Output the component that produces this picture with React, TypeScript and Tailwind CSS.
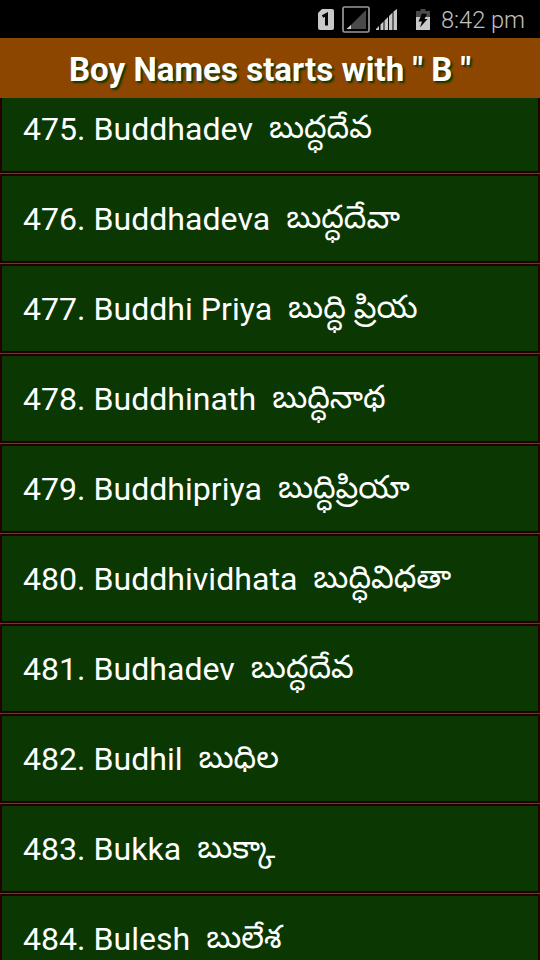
const names = [
  { id: 475, en: "Buddhadev", te: "బుద్ధదేవ" },
  { id: 476, en: "Buddhadeva", te: "బుద్ధదేవా" },
  { id: 477, en: "Buddhi Priya", te: "బుద్ధి ప్రియ" },
  { id: 478, en: "Buddhinath", te: "బుద్ధినాథ" },
  { id: 479, en: "Buddhipriya", te: "బుద్ధిప్రియా" },
  { id: 480, en: "Buddhividhata", te: "బుద్ధివిధతా" },
  { id: 481, en: "Budhadev", te: "బుద్ధదేవ" },
  { id: 482, en: "Budhil", te: "బుధిల" },
  { id: 483, en: "Bukka", te: "బుక్కా" },
  { id: 484, en: "Bulesh", te: "బులేశ" },
];

function SimIcon() {
  return (
    <svg width="16" height="21" viewBox="0 0 16 21">
      <path d="M4 0H14a2 2 0 0 1 2 2v17a2 2 0 0 1-2 2H2a2 2 0 0 1-2-2V4z" fill="#c8c8c8" />
      <path d="M4.500 7.500L8.500 5.500V16.500" fill="none" stroke="#000" strokeWidth="3" />
    </svg>
  );
}

function EmptySignalIcon() {
  return (
    <svg width="28" height="27" viewBox="0 0 28 27">
      <rect x="1" y="1" width="26" height="25" rx="1.500" fill="none" stroke="#999" strokeWidth="1.700" />
      <path d="M24 4v19H5z" fill="#4a4a4a" />
      <path d="M9 19v4H4.500z" fill="#d0d0d0" />
    </svg>
  );
}

function SignalIcon() {
  return (
    <svg width="21" height="21" viewBox="0 0 21 21">
      <path
        d="M0 21v-1l3-3v4zM4.500 21v-5.500l3-3V21zM8.500 21V11.500l3.500-3.500v13zM13 21V7l3.500-3.500V21zM17.500 21V2.500l3.500-2.500V21z"
        fill="#c8c8c8"
      />
    </svg>
  );
}

function BatteryIcon() {
  return (
    <svg width="14" height="21" viewBox="0 0 14 21">
      <path d="M4.500 0h5v2H14v6H0V2h4.500z" fill="#4a4a4a" />
      <path d="M0 8h14v13H0z" fill="#c8c8c8" />
      <path d="M6 4.500L2.500 12.500h3.500L4 18.500l7.500-8.500H8.500L11 5z" fill="#000" />
    </svg>
  );
}

export default function App() {
  return (
    <div className="flex h-[960px] w-[540px] flex-col overflow-hidden bg-[#0a3702] font-['Roboto','Noto_Sans_Telugu','Noto_Sans',sans-serif] text-white">
      <div className="flex h-[38px] shrink-0 items-center justify-end bg-black pr-[15px] text-[#c0c0c0]">
        <SimIcon />
        <span className="ml-2">
          <EmptySignalIcon />
        </span>
        <span className="ml-[6px]">
          <SignalIcon />
        </span>
        <span className="ml-[19px]">
          <BatteryIcon />
        </span>
        <span className="ml-[11px] mt-[3px] text-[23.6px] font-light">8:42 pm</span>
      </div>
      <header className="flex h-[60px] shrink-0 items-center justify-center bg-[#8c4600] pt-[3px] text-[33.1px] font-bold [text-shadow:2px_2px_2px_#0a3702]">
        Boy Names starts with " B "
      </header>
      <div className="flex min-h-0 flex-1 flex-col overflow-hidden">
        <ul className="-mt-[14px]">
          {names.map((n) => (
            <li key={n.id} className="h-[90px] border-b border-[#6e3636]">
              <div className="flex h-[89px] items-center border-2 border-[#260000] px-[21px] text-[32px]">
                <span className="mt-[2px] text-[32.1px]">{n.id}. {n.en}</span>
                <span className="mb-1 ml-4">{n.te}</span>
              </div>
            </li>
          ))}
        </ul>
      </div>
    </div>
  );
}
